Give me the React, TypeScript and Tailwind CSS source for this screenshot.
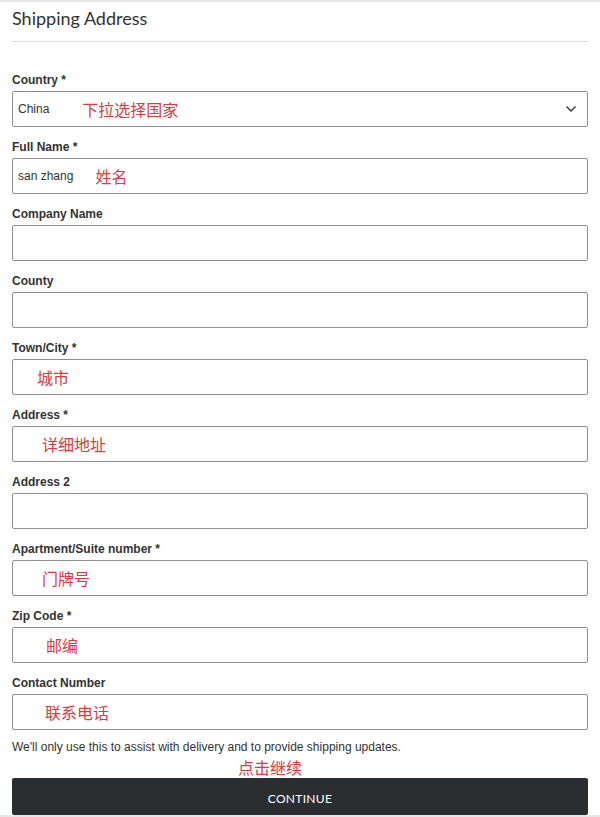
import React from "react";

const label = "block text-[12px] leading-[18px] font-bold text-[#333] mb-[2px]";
const box =
  "flex h-[36px] w-full items-center rounded-[2px] border border-[#8f8f8f] bg-white pl-[5px] pr-[10px] text-[12px] text-[#333]";
const note = "text-[16px] leading-[20px] text-[#dc3a3f] [font-family:'Noto_Sans_CJK_SC',sans-serif]";

function Field({ label: text, value, tip, tipGap }: any) {
  return (
    <div className="mb-[11px]">
      <label className={label}>{text}</label>
      <div className={box}>
        {value && <span>{value}</span>}
        {tip && (
          <span className={note} style={{ marginLeft: tipGap }}>
            {tip}
          </span>
        )}
      </div>
    </div>
  );
}

export default function App() {
  return (
    <div className="min-h-[817px] border-t-2 border-[#e6e6e6] bg-white font-['Liberation_Sans',Arial,sans-serif]">
      <div className="px-3">
        <h2 className="pt-[4px] text-[18px] leading-[24px] text-[#333] font-['Lato',sans-serif]">
          Shipping Address
        </h2>
        <div className="mt-[11px] mb-[29px] border-t border-[#dedede]" />

        <div className="mb-[11px]">
          <label className={label}>Country *</label>
          <div className={box}>
            <span>China</span>
            <span className={note} style={{ marginLeft: 33 }}>
              下拉选择国家
            </span>
            <svg
              className="ml-auto"
              width="12"
              height="8"
              viewBox="0 0 12 8"
              fill="none"
              stroke="#333"
              strokeWidth="1.4"
            >
              <path d="M1.5 1.5 6 6l4.5-4.5" />
            </svg>
          </div>
        </div>

        <Field label="Full Name *" value="san zhang" tip="姓名" tipGap={22} />
        <Field label="Company Name" />
        <Field label="County" />
        <Field label="Town/City *" tip="城市" tipGap={19} />
        <Field label="Address *" tip="详细地址" tipGap={24} />
        <Field label="Address 2" />
        <Field label="Apartment/Suite number *" tip="门牌号" tipGap={24} />
        <Field label="Zip Code *" tip="邮编" tipGap={28} />

        <div>
          <label className={label}>Contact Number</label>
          <div className={box}>
            <span className={note} style={{ marginLeft: 27 }}>
              联系电话
            </span>
          </div>
        </div>

        <p className="mt-[9px] text-[12px] leading-[16px] text-[#333]">
          We'll only use this to assist with delivery and to provide shipping updates.
        </p>
        <div className="flex h-[23px] items-start pt-[2px] pl-[226px]">
          <span className={note}>点击继续</span>
        </div>
        <button className="flex h-[37px] w-full items-center justify-center rounded-[2px] bg-[#2b2e31] pt-[5px] text-[12px] tracking-[0.3px] text-white font-['Lato',sans-serif]">
          CONTINUE
        </button>
      </div>
      <div className="h-[2px] bg-[#e6e6e6]" />
    </div>
  );
}
